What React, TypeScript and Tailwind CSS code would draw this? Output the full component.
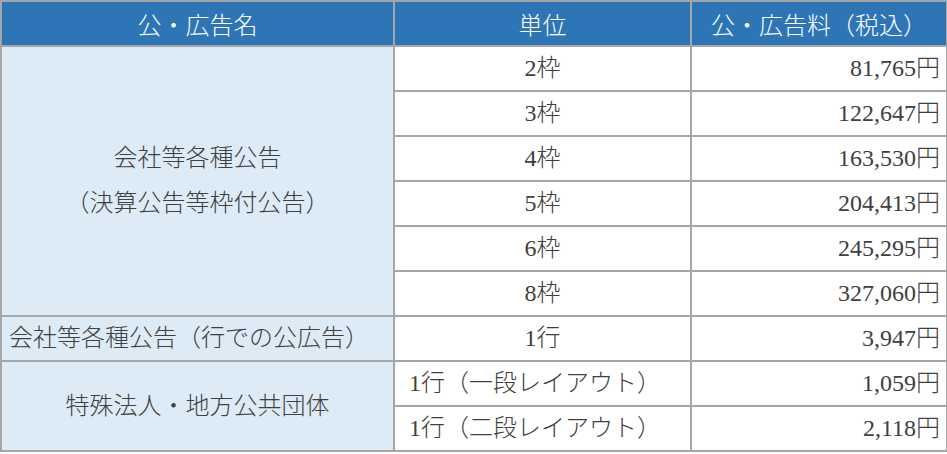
const font = { fontFamily: '"Liberation Serif", "Noto Sans CJK JP", serif' }

const frames = [
  { unit: "2枠", price: "81,765円" },
  { unit: "3枠", price: "122,647円" },
  { unit: "4枠", price: "163,530円" },
  { unit: "5枠", price: "204,413円" },
  { unit: "6枠", price: "245,295円" },
  { unit: "8枠", price: "327,060円" },
]

const cell = "border-2 border-[#a6a6a6] h-[45px] p-0 leading-[41px]"
const nameCell = `${cell} bg-[#ddebf7] text-center`
const unitCell = `${cell} bg-white text-center`
const priceCell = `${cell} bg-white text-right pr-[6px]`

export default function App() {
  return (
    <div className="w-[947px] h-[454px] bg-white overflow-hidden">
      <table
        className="w-[946px] border-collapse table-fixed text-[24px] font-light text-[#404040]"
        style={font}
      >
        <colgroup>
          <col className="w-[393px]" />
          <col className="w-[297px]" />
          <col className="w-[256px]" />
        </colgroup>
        <thead>
          <tr>
            {["公・広告名", "単位", "公・広告料（税込）"].map((h) => (
              <th
                key={h}
                className={`${cell} bg-[#2e75b6] text-white font-light text-center`}
                style={{ fontFamily: '"Noto Sans CJK JP", sans-serif' }}
              >
                {h}
              </th>
            ))}
          </tr>
        </thead>
        <tbody>
          {frames.map((f, i) => (
            <tr key={f.unit}>
              {i === 0 && (
                <td rowSpan={6} className={`${nameCell} leading-[45px]`}>
                  <div>会社等各種公告</div>
                  <div>（決算公告等枠付公告）</div>
                </td>
              )}
              <td className={unitCell}>{f.unit}</td>
              <td className={priceCell}>{f.price}</td>
            </tr>
          ))}
          <tr>
            <td className={`${cell} bg-[#ddebf7] text-left pl-[7px] whitespace-nowrap`}>
              会社等各種公告（行での公広告）
            </td>
            <td className={unitCell}>1行</td>
            <td className={priceCell}>3,947円</td>
          </tr>
          <tr>
            <td rowSpan={2} className={nameCell}>
              特殊法人・地方公共団体
            </td>
            <td className={`${cell} bg-white text-left pl-[14px] whitespace-nowrap`}>
              1行（一段レイアウト）
            </td>
            <td className={priceCell}>1,059円</td>
          </tr>
          <tr>
            <td className={`${cell} bg-white text-left pl-[14px] whitespace-nowrap`}>
              1行（二段レイアウト）
            </td>
            <td className={priceCell}>2,118円</td>
          </tr>
        </tbody>
      </table>
    </div>
  )
}
